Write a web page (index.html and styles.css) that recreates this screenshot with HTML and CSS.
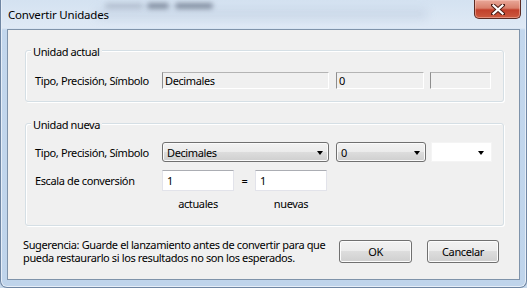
FILE: index.html
```html
<!DOCTYPE html>
<html lang="es">
<head>
<meta charset="utf-8">
<title>Convertir Unidades</title>
<link rel="stylesheet" href="styles.css">
</head>
<body>
<div class="window">
  <div class="titlebar">
    <div class="glass" aria-hidden="true">
      <span class="smudge s1"></span><span class="smudge s2"></span><span class="smudge s3"></span><span class="smudge s4"></span>
    </div>
    <span class="title">Convertir Unidades</span>
    <button class="close" aria-label="Cerrar">
      <svg width="14" height="11" viewBox="0 0 14 11">
        <path d="M2 1 L12 10 M12 1 L2 10" stroke="#4a1a12" stroke-width="4" stroke-linecap="square" fill="none"/>
        <path d="M2.5 1.5 L11.5 9.5 M11.5 1.5 L2.5 9.5" stroke="#ffffff" stroke-width="2.2" stroke-linecap="square" fill="none"/>
      </svg>
    </button>
  </div>
  <div class="content">
    <div class="group g1">
      <div class="group-title">Unidad actual</div>
      <div class="row row-current">
        <span class="lbl">Tipo, Precisión, Símbolo</span>
        <div class="field f-type">Decimales</div>
        <div class="field f-prec">0</div>
        <div class="field f-sym"></div>
      </div>
    </div>
    <div class="group g2">
      <div class="group-title">Unidad nueva</div>
      <div class="row row-combos">
        <span class="lbl">Tipo, Precisión, Símbolo</span>
        <div class="combo c-type"><span>Decimales</span><i class="arrow"></i></div>
        <div class="combo c-prec"><span>0</span><i class="arrow"></i></div>
        <div class="combo c-sym white"><span></span><i class="arrow"></i></div>
      </div>
      <div class="row row-scale">
        <span class="lbl">Escala de conversión</span>
        <div class="input">1</div>
        <span class="eq">=</span>
        <div class="input">1</div>
      </div>
      <div class="row row-captions">
        <span class="cap">actuales</span>
        <span class="cap">nuevas</span>
      </div>
    </div>
    <div class="footer">
      <p class="hint">Sugerencia: Guarde el lanzamiento antes de convertir para que<br>pueda restaurarlo si los resultados no son los esperados.</p>
      <div class="buttons">
        <button class="btn btn-ok">OK</button>
        <button class="btn btn-cancel">Cancelar</button>
      </div>
    </div>
  </div>
</div>
</body>
</html>
```
FILE: styles.css
```css
* { box-sizing: border-box; }
html, body { margin: 0; padding: 0; }
body {
  width: 527px;
  height: 288px;
  overflow: hidden;
  font-family: "Noto Sans", "Open Sans", sans-serif;
  font-size: 11px;
  letter-spacing: -0.38px;
  color: #000;
  background: #c7d9ec;
}
.window {
  width: 527px;
  height: 288px;
  display: flex;
  flex-direction: column;
  border: 1px solid #6f86a3;
  border-top: none;
  border-radius: 0 0 7px 7px;
  background: linear-gradient(180deg, #d4e2f1 0px, #dfe9f5 28px, #c3d7ed 30px, #bfd4eb 100%);
  box-shadow: inset 1px 0 0 #e6eef8, inset -1px 0 0 #e6eef8, inset 0 -1px 0 #e6eef8;
  padding: 0 6px 7px 6px;
}
.titlebar {
  position: relative;
  height: 29px;
  display: flex;
  align-items: flex-start;
  flex: none;
}
.glass {
  position: absolute;
  left: 0; top: 0; right: 0; bottom: 0;
  pointer-events: none;
}
.smudge {
  position: absolute;
  background: rgba(70, 80, 100, 0.45);
  filter: blur(2.5px);
  border-radius: 3px;
}
.s1 { left: 98px; top: 3px; width: 38px; height: 6px; background: rgba(90, 100, 120, 0.25); }
.s2 { left: 140px; top: 3px; width: 22px; height: 6px; background: rgba(50, 60, 80, 0.5); }
.s3 { left: 168px; top: 3px; width: 38px; height: 6px; background: rgba(50, 60, 80, 0.5); }
.s4 { left: 90px; top: 9px; width: 330px; height: 10px; background: rgba(150, 170, 195, 0.22); filter: blur(5px); }
.title {
  position: relative;
  padding: 7px 0 0 1px;
  line-height: 15px;
  font-size: 11.5px;
  letter-spacing: -0.2px;
  white-space: nowrap;
  color: #000;
}
.close {
  position: relative;
  margin-left: auto;
  margin-right: -1px;
  width: 47px;
  height: 19px;
  padding: 0;
  border: 1px solid #5b2a22;
  border-top: none;
  border-radius: 0 0 5px 5px;
  background: linear-gradient(180deg, #e9a899 0%, #d9806c 45%, #c2402b 55%, #cc5a3f 100%);
  box-shadow: inset 0 0 0 1px rgba(255, 210, 200, 0.45);
  display: flex;
  align-items: center;
  justify-content: center;
}
.close svg { display: block; }
.content {
  flex: 1;
  min-height: 0;
  border: 1px solid #7f93aa;
  background: #f0f0f0;
  display: flex;
  flex-direction: column;
}
.group {
  margin: 20px 15px 0 17px;
  border: 1px solid #d5dfe5;
  border-radius: 3px;
  box-shadow: 1px 1px 0 #fff, inset 1px 1px 0 #fff;
  padding: 0 0 0 9px;
  flex: none;
}
.g1 { padding-bottom: 12px; }
.g2 { margin-top: 21px; padding-bottom: 14px; }
.group-title {
  width: max-content;
  margin: -7px 0 0 -4px;
  padding: 0 2px;
  line-height: 15px;
  background: #f0f0f0;
}
.row {
  display: flex;
  align-items: center;
}
.lbl {
  width: 127px;
  flex: none;
  line-height: 15px;
  white-space: nowrap;
}
.row-current { margin-top: 13px; }
.field {
  height: 17px;
  line-height: 15px;
  padding-left: 2px;
  background: #f0f0f0;
  border-top: 1px solid #b4b4b4;
  border-left: 1px solid #8e8e8e;
  border-right: 1px solid #ffffff;
  border-bottom: 1px solid #ffffff;
  color: #000;
  flex: none;
}
.f-type { width: 167px; }
.f-prec { width: 88px; margin-left: 7px; }
.f-sym { width: 61px; margin-left: 6px; }
.row-combos { margin-top: 10px; }
.combo {
  height: 20px;
  display: flex;
  align-items: center;
  justify-content: space-between;
  padding: 0 5px 0 4px;
  border: 1px solid #707070;
  border-radius: 3px;
  background: linear-gradient(180deg, #f2f2f2 0%, #ebebeb 50%, #dddddd 50%, #cfcfcf 100%);
  box-shadow: inset 0 0 0 1px #fafafa;
  line-height: 15px;
  flex: none;
}
.combo.white {
  background: #ffffff;
  border: 1px solid #f4f4f4;
  border-radius: 0;
  box-shadow: none;
  padding-right: 7px;
}
.c-type { width: 167px; }
.c-prec { width: 90px; margin-left: 7px; }
.c-sym { width: 61px; margin-left: 5px; }
.arrow {
  width: 0;
  height: 0;
  border-left: 3.5px solid transparent;
  border-right: 3.5px solid transparent;
  border-top: 4px solid #000;
  margin-top: 1px;
}
.row-scale { margin-top: 8px; }
.input {
  width: 72px;
  height: 21px;
  line-height: 17px;
  padding: 1px 0 0 4px;
  background: #fff;
  border: 1px solid #e2e3ea;
  border-top-color: #abadb3;
  flex: none;
}
.eq {
  width: 21px;
  text-align: center;
  line-height: 15px;
  flex: none;
}
.row-captions {
  margin-top: 5px;
  padding-left: 127px;
}
.cap {
  width: 72px;
  text-align: center;
  line-height: 15px;
  flex: none;
}
.cap + .cap { margin-left: 21px; }
.footer {
  display: flex;
  align-items: center;
  margin-top: 12px;
  padding: 0 20px 0 15px;
  flex: none;
}
.hint {
  margin: 0;
  line-height: 13px;
  flex: 1;
  min-width: 0;
  white-space: nowrap;
}
.buttons {
  display: flex;
  gap: 15px;
  flex: none;
}
.btn {
  height: 23px;
  width: 72px;
  padding: 0;
  font: inherit;
  letter-spacing: inherit;
  color: #000;
  border: 1px solid #707070;
  border-radius: 3px;
  background: linear-gradient(180deg, #f2f2f2 0%, #ebebeb 50%, #dddddd 50%, #cfcfcf 100%);
  box-shadow: inset 0 0 0 1px #fcfcfc;
}
.btn-ok { width: 73px; }
```
